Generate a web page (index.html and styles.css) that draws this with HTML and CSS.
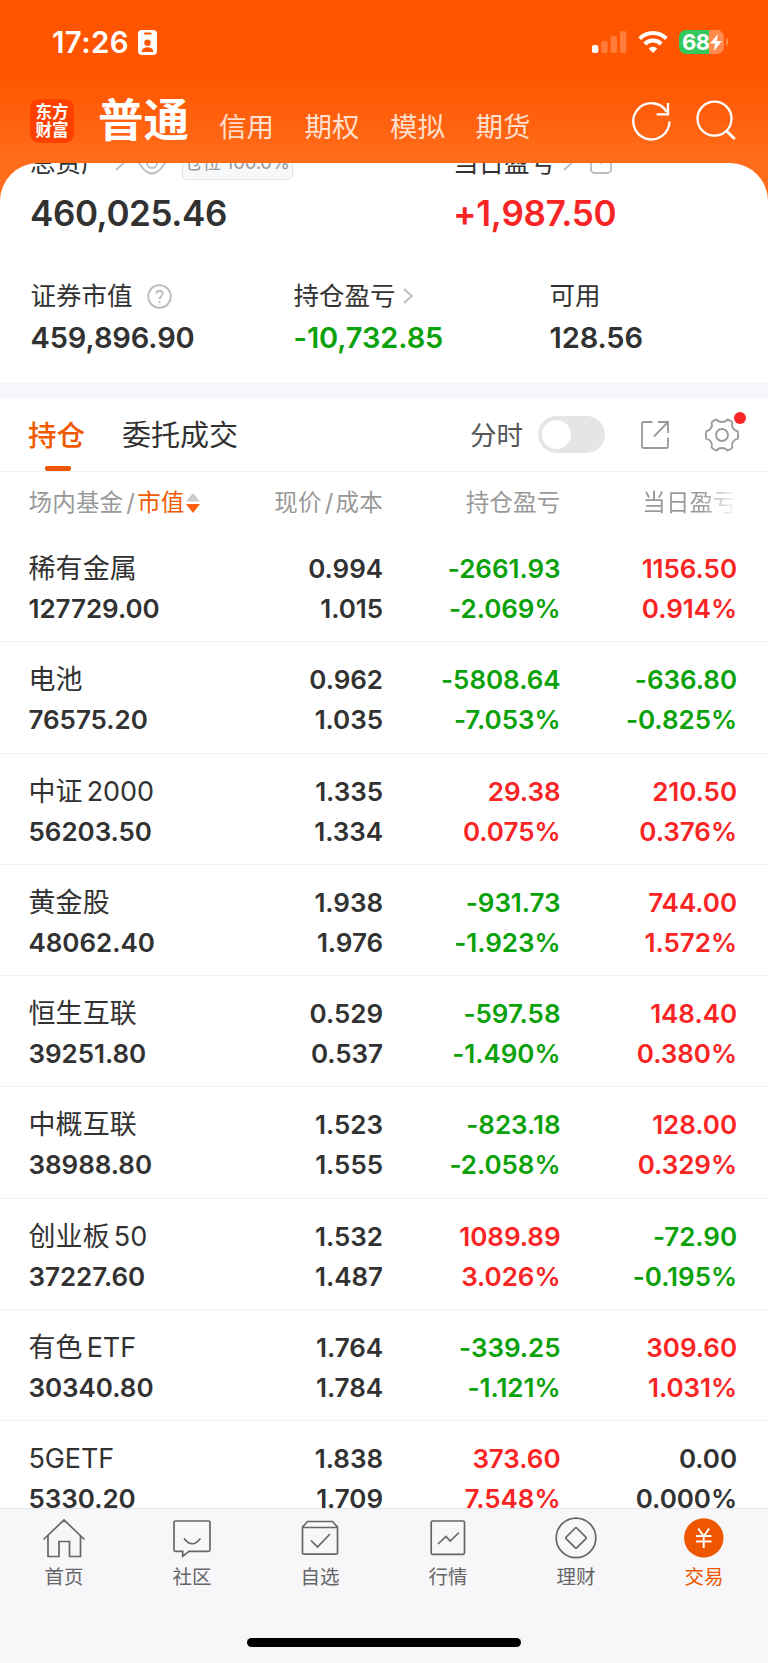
FILE: index.html
```html
<!DOCTYPE html>
<html lang="zh-CN">
<head>
<meta charset="utf-8">
<title>交易</title>
<link rel="stylesheet" href="styles.css">
</head>
<body>
<div class="app">
  <header class="hero">
    <div class="status">
      <span class="time">17:26</span>
      <svg class="badge-icon" width="19" height="25" viewBox="0 0 19 25"><rect width="19" height="25" rx="4" fill="#fff"/><rect x="6" y="2.6" width="7.500" height="1.800" rx=".9" fill="#ff5500"/><circle cx="9.500" cy="12.800" r="3.200" fill="#ff5500"/><path d="M3.500 22c.3-3.300 2.600-4.800 6-4.800s5.700 1.500 6 4.800z" fill="#ff5500"/></svg>
      <div class="status-right">
        <svg width="36" height="24" viewBox="0 0 36 24" fill="#fff"><rect x="0" y="15" width="6.300" height="8" rx="1.800"/><g opacity=".23"><rect x="9.300" y="11" width="6.300" height="12" rx="1.800"/><rect x="18.600" y="6" width="6.300" height="17" rx="1.800"/><rect x="28" y="1" width="6.300" height="22" rx="1.800"/></g></svg>
        <svg class="wifi" width="30" height="24" viewBox="0 0 30 24" fill="none" stroke="#fff" stroke-width="4"><path d="M1.700 8.600a18.800 18.800 0 0 1 26.600 0"/><path d="M6.800 14a11.600 11.600 0 0 1 16.400 0"/><path d="M15 23l-4.300-4.500a6.200 6.200 0 0 1 8.600 0z" fill="#fff" stroke="none"/></svg>
        <div class="battery"><span>68</span><svg width="12" height="17" viewBox="0 0 12 17"><path d="M8 0L0 9.500h5L3.800 17 12 7H6.700z" fill="#fff"/></svg></div>
        <i class="battery-cap"></i>
      </div>
    </div>
    <nav class="accounts">
      <div class="logo"><span>东方</span><span>财富</span></div>
      <b class="account-on">普通</b>
      <span>信用</span><span>期权</span><span>模拟</span><span>期货</span>
      <svg class="tools" width="108" height="42" viewBox="0 0 108 42" fill="none" stroke="#fff" stroke-width="2.300"><path d="M35.800 11.800A18.100 18.100 0 1 0 38.500 21.500"/><path d="M37 3v11.400H25.600"/><circle cx="83.500" cy="18.700" r="17"/><path d="M95.300 30.700l8.500 8.300" stroke-width="2.800"/></svg>
    </nav>
  </header>

  <main class="sheet">
    <section class="summary">
      <div class="peek">
        <div class="peek-left">总资产<svg class="chev" width="10" height="18" viewBox="0 0 10 18"><path d="M1 2l7.500 7L1 16"/></svg><svg class="eye" width="28" height="24" viewBox="0 0 28 24"><path d="M1 12q13-21 26 0q-13 21-26 0z"/><circle cx="14" cy="12" r="5"/></svg><span class="ratio">仓位 100.0%</span></div>
        <div class="peek-right">当日盈亏<svg class="chev" width="10" height="18" viewBox="0 0 10 18"><path d="M1 2l7.500 7L1 16"/></svg><svg class="cal" width="22" height="22" viewBox="0 0 22 22"><rect x="1" y="1" width="20" height="20" rx="3.500"/><path d="M8 8l3 3 3-3"/></svg></div>
      </div>
      <div class="totals"><strong>460,025.46</strong><strong class="up">+1,987.50</strong></div>
      <div class="metrics">
        <div class="metric"><div class="metric-label">证券市值<svg class="help" width="25" height="25" viewBox="0 0 25 25"><circle cx="12.500" cy="12.500" r="11.300"/><path d="M9.300 9.800c.1-4.100 6.400-4 6.400-.1 0 2.500-3.200 2.700-3.200 5.600"/><path d="M12.500 17v2"/></svg></div><strong>459,896.90</strong></div>
        <div class="metric"><div class="metric-label">持仓盈亏<svg class="chev small" width="10" height="16" viewBox="0 0 10 16"><path d="M1 1l7.800 7L1 15"/></svg></div><strong class="down">-10,732.85</strong></div>
        <div class="metric"><div class="metric-label">可用</div><strong>128.56</strong></div>
      </div>
    </section>

    <section class="tabs">
      <span class="tab on">持仓</span>
      <span class="tab">委托成交</span>
      <span class="mode">分时</span>
      <span class="switch"><i></i></span>
      <svg class="share" width="30" height="30" viewBox="0 0 30 30"><path d="M12.500 2H3.500Q2 2 2 3.500v23Q2 28 3.500 28h23q1.500 0 1.500-1.500V17.500M18 2h10v11M28 2L14 16.500"/></svg>
      <div class="gear"><svg width="36" height="36" viewBox="0 0 36 36"><path d="M12.600 2.500C14 4.700 16 5 18 5s4-.3 5.400-2.500q3 .6 5 3c-1.400 4 .8 7.700 5.300 8.800q1 3.700 0 7.400c-4.500 1.100-6.700 4.800-5.300 8.800q-2 2.400-5 3C22 31.300 20 31 18 31s-4 .3-5.400 2.500q-3-.6-5-3c1.400-4-.8-7.700-5.300-8.800q-1-3.700 0-7.400c4.500-1.100 6.700-4.800 5.300-8.800q2-2.400 5-3z"/><circle cx="18" cy="18" r="6"/></svg><i></i></div>
    </section>

    <section class="table">
      <div class="thead"><div>场内基金<em>/</em><span class="sorted">市值</span><svg width="14" height="20" viewBox="0 0 14 20"><path d="M7 0l7 8.500H0z" fill="#ccc"/><path d="M0 11h14l-7 9z" fill="#ff5f0f"/></svg></div><div>现价<em>/</em>成本</div><div>持仓盈亏</div><div class="fade">当日盈亏</div></div>
      <div class="row"><div><span class="name">稀有金属</span><b>127729.00</b></div><div><b>0.994</b><b>1.015</b></div><div class="down"><b>-2661.93</b><b>-2.069%</b></div><div class="up"><b>1156.50</b><b>0.914%</b></div></div>
      <div class="row"><div><span class="name">电池</span><b>76575.20</b></div><div><b>0.962</b><b>1.035</b></div><div class="down"><b>-5808.64</b><b>-7.053%</b></div><div class="down"><b>-636.80</b><b>-0.825%</b></div></div>
      <div class="row"><div><span class="name">中证<em>2000</em></span><b>56203.50</b></div><div><b>1.335</b><b>1.334</b></div><div class="up"><b>29.38</b><b>0.075%</b></div><div class="up"><b>210.50</b><b>0.376%</b></div></div>
      <div class="row"><div><span class="name">黄金股</span><b>48062.40</b></div><div><b>1.938</b><b>1.976</b></div><div class="down"><b>-931.73</b><b>-1.923%</b></div><div class="up"><b>744.00</b><b>1.572%</b></div></div>
      <div class="row"><div><span class="name">恒生互联</span><b>39251.80</b></div><div><b>0.529</b><b>0.537</b></div><div class="down"><b>-597.58</b><b>-1.490%</b></div><div class="up"><b>148.40</b><b>0.380%</b></div></div>
      <div class="row"><div><span class="name">中概互联</span><b>38988.80</b></div><div><b>1.523</b><b>1.555</b></div><div class="down"><b>-823.18</b><b>-2.058%</b></div><div class="up"><b>128.00</b><b>0.329%</b></div></div>
      <div class="row"><div><span class="name">创业板<em>50</em></span><b>37227.60</b></div><div><b>1.532</b><b>1.487</b></div><div class="up"><b>1089.89</b><b>3.026%</b></div><div class="down"><b>-72.90</b><b>-0.195%</b></div></div>
      <div class="row"><div><span class="name">有色<em>ETF</em></span><b>30340.80</b></div><div><b>1.764</b><b>1.784</b></div><div class="down"><b>-339.25</b><b>-1.121%</b></div><div class="up"><b>309.60</b><b>1.031%</b></div></div>
      <div class="row"><div><span class="name"><em class="lead">5GETF</em></span><b>5330.20</b></div><div><b>1.838</b><b>1.709</b></div><div class="up"><b>373.60</b><b>7.548%</b></div><div><b>0.00</b><b>0.000%</b></div></div>
    </section>
  </main>

  <footer class="bottom">
    <nav class="bottom-nav">
      <div><svg width="44" height="44" viewBox="0 0 44 44"><path d="M1.500 22.500L22 3l20.500 19.500M6 18.500v21h11v-15h10.500v15h11v-21"/></svg>首页</div>
      <div><svg width="44" height="44" viewBox="0 0 44 44"><path d="M5.500 4h33q1.500 0 1.500 1.500v27.300q0 1.500-1.500 1.500H19l-6.300 4.900v-4.900H5.500Q4 34.300 4 32.800V5.500Q4 4 5.500 4zM14 21.500q8 10.500 16.500 0"/></svg>社区</div>
      <div><svg width="44" height="44" viewBox="0 0 44 44"><path d="M4.500 10L9.500 4.500h25l5 5.500v25.700q0 1.500-1.500 1.500H6q-1.500 0-1.500-1.500zM4.500 10.500h35M13 23.500l6.500 6.500 12.500-13"/></svg>自选</div>
      <div><svg width="44" height="44" viewBox="0 0 44 44"><rect x="5.200" y="4" width="33.300" height="33.300" rx="1.500"/><path d="M12 27l8-7.500 4.200 4.500 8.800-8.500"/></svg>行情</div>
      <div><svg width="44" height="44" viewBox="0 0 44 44"><circle cx="22" cy="20.900" r="19.800"/><rect x="14.500" y="13.400" width="15" height="15" rx="1" transform="rotate(45 22 20.900)"/></svg>理财</div>
      <div class="active"><svg width="44" height="44" viewBox="0 0 44 44"><circle cx="21.800" cy="20.900" r="19.700" class="coin"/><path class="yen" d="M16.200 11.500l5.500 7.800 5.500-7.800M21.700 19v12M14 19h15.500M14 24.500h15.500"/></svg>交易</div>
    </nav>
    <div class="home-bar"></div>
  </footer>
</div>
</body>
</html>
```
FILE: styles.css
```css
* { box-sizing: border-box; }
body { margin: 0; background: #fff; font-family: Inter, "Noto Sans CJK SC", sans-serif; color: #323232; }
svg { flex: none; display: block; }
i, em { font-style: normal; }
strong, .row b { font-weight: 600; }
.app { width: 768px; height: 1663px; display: flex; flex-direction: column; overflow: hidden; background: linear-gradient(#ff5500 75px, #ff6c1a 160px, #ff6c1a 220px, #fff 220px); }

.hero { height: 163px; flex: none; color: #fff; }
.status { height: 84px; padding: 0 40px 0 52px; display: flex; align-items: center; }
.time { font-size: 29.500px; font-weight: 600; line-height: 40px; width: 86px; letter-spacing: 0.4px; }
.status-right { display: flex; align-items: center; margin-left: auto; }
.wifi { margin-left: 10px; }
.battery { width: 45px; height: 24px; margin-left: 11px; border-radius: 7px; background: linear-gradient(90deg, #34c759 30px, #ff8a4d 30px); display: flex; align-items: center; padding-left: 3px; font-size: 22px; font-weight: 700; line-height: 24px; }
.battery span { width: 28px; letter-spacing: -0.6px; }
.battery-cap { width: 2px; height: 8px; margin-left: 2px; border-radius: 0 2px 2px 0; background: #ff8a4d; }
.accounts { height: 79px; padding: 0 29px 0 30px; display: flex; align-items: flex-start; font-size: 27.500px; line-height: 40px; }
.accounts > span { margin: 23px 30.500px 0 0; color: #ffdfce; width: 55px; white-space: nowrap; font-weight: 400; }
.logo { width: 44px; height: 44px; margin-top: 15px; border-radius: 9px; background: #ff4100; display: flex; flex-direction: column; align-items: center; padding-top: 4px; font-size: 16.500px; font-weight: 700; line-height: 18px; }
.accounts .account-on { margin: 10px 29px 0 24px; font-size: 45.500px; line-height: 54px; font-weight: 600; width: 92px; white-space: nowrap; }
.tools { margin: 16px 0 0 auto; }

.sheet { height: 1345px; flex: none; background: #fff; border-radius: 38px 38px 0 0; overflow: hidden; }
.up { color: #f92424; }
.down { color: #0aa10a; }
.summary { height: 220px; display: flex; flex-direction: column; }
.peek { height: 44px; flex: none; margin: -22px 0 3px; display: grid; grid-template-columns: 423px 1fr; padding-left: 30px; }
.peek-left, .peek-right { height: 44px; display: flex; align-items: center; font-size: 25.500px; line-height: 40px; }
.chev, .eye, .help, .cal { fill: none; stroke: #bbb; stroke-width: 1.800; }
.chev { margin-left: 8px; }
.chev.small { margin-left: 7px; }
.eye { margin-left: 13px; }
.ratio { margin: -2px 0 0 16px; width: 111px; height: 35px; border: 1px solid #e2e4ea; border-radius: 5px; background: #f7f8fa; color: #999; font-size: 18.500px; line-height: 33px; text-align: center; white-space: nowrap; letter-spacing: -0.2px; }
.cal { margin-left: 17px; }
.peek-right .cal { margin-top: -1px; }
.totals { flex: none; display: grid; grid-template-columns: 423px 1fr; padding-left: 30px; height: 50px; font-size: 35px; line-height: 50px; }
.totals strong { letter-spacing: -0.400px; }
.totals .up { letter-spacing: -0.250px; }
.metrics { display: grid; grid-template-columns: 263px 256px 1fr; padding: 38px 0 0 30.500px; }
.metric-label { display: flex; align-items: center; font-size: 25.500px; line-height: 40px; }
.help { margin-left: 14px; }
.metric strong { display: block; font-size: 29px; line-height: 44px; letter-spacing: -0.100px; }

.tabs { border-top: 15px solid #f6f7fa; border-bottom: 1px solid #f3f3f5; height: 89px; display: flex; align-items: center; padding-left: 28px; font-size: 28.500px; line-height: 40px; }
.tab { height: 73px; line-height: 75px; width: 94px; white-space: nowrap; position: relative; }
.tab + .tab { width: 348px; font-size: 29px; }
.tab.on { color: #f05a00; font-weight: 500; }
.tab.on::after { content: ""; position: absolute; left: 17px; bottom: 0; width: 26px; height: 5px; border-radius: 2px; background: #ee5600; }
.mode { color: #555; font-size: 26.500px; width: 68px; }
.switch { width: 67px; height: 37px; border-radius: 19px; background: #e4e5e7; padding: 4px; }
.switch i { display: block; width: 29px; height: 29px; border-radius: 50%; background: #fff; }
.share, .gear svg { fill: none; stroke: #999; stroke-width: 1.800; }
.share { margin-left: 35px; }
.gear { margin-left: 34px; position: relative; }
.gear i { position: absolute; width: 12px; height: 12px; border-radius: 50%; right: -6px; top: -5px; background: #f92424; }

.thead, .row { display: grid; grid-template-columns: 204.500px 150px 177.500px 176.500px; padding-left: 28.500px; text-align: right; }
.thead > :first-child, .row > :first-child { text-align: left; }
.thead { height: 59px; line-height: 61px; font-size: 23.500px; letter-spacing: 0.2px; color: #999; }
.thead > div { white-space: nowrap; }
.thead > :first-child { display: flex; align-items: center; }
.thead em { margin: 0 2px 0 3px; font-size: 24px; }
.thead svg { margin-left: 1px; }
.sorted { color: #f05a00; }
.fade { background: linear-gradient(90deg, #999 80%, #fff 100%); -webkit-background-clip: text; background-clip: text; color: transparent; }
.row { height: 111.300px; padding-top: 18px; font-size: 26px; line-height: 40px; border-bottom: 1px solid #f3f3f5; }
.row b, .name { display: block; height: 40px; white-space: nowrap; }
.row b { letter-spacing: -0.050px; }
.name { font-size: 27px; letter-spacing: 0.1px; }
.name em { margin-left: 4px; font-weight: 400; letter-spacing: -0.1px; }
.name .lead { margin-left: 0; }

.bottom { height: 155px; flex: none; background: #f7f7fa; border-top: 1px solid #e2e2ea; }
.bottom-nav { display: grid; grid-template-columns: repeat(6, 1fr); padding-top: 8px; color: #666; font-size: 19.500px; line-height: 32px; height: 128px; }
.bottom-nav > div { display: flex; flex-direction: column; align-items: center; }
.bottom-nav svg { fill: none; stroke: #666; stroke-width: 1.700; }
.bottom-nav .active { color: #ee5600; }
.bottom-nav .coin { fill: #ee5600; stroke: none; }
.bottom-nav .yen { stroke: #fff; stroke-width: 2; }
.home-bar { width: 274px; height: 9px; border-radius: 5px; background: #000; margin: 1px auto 0; }
```
